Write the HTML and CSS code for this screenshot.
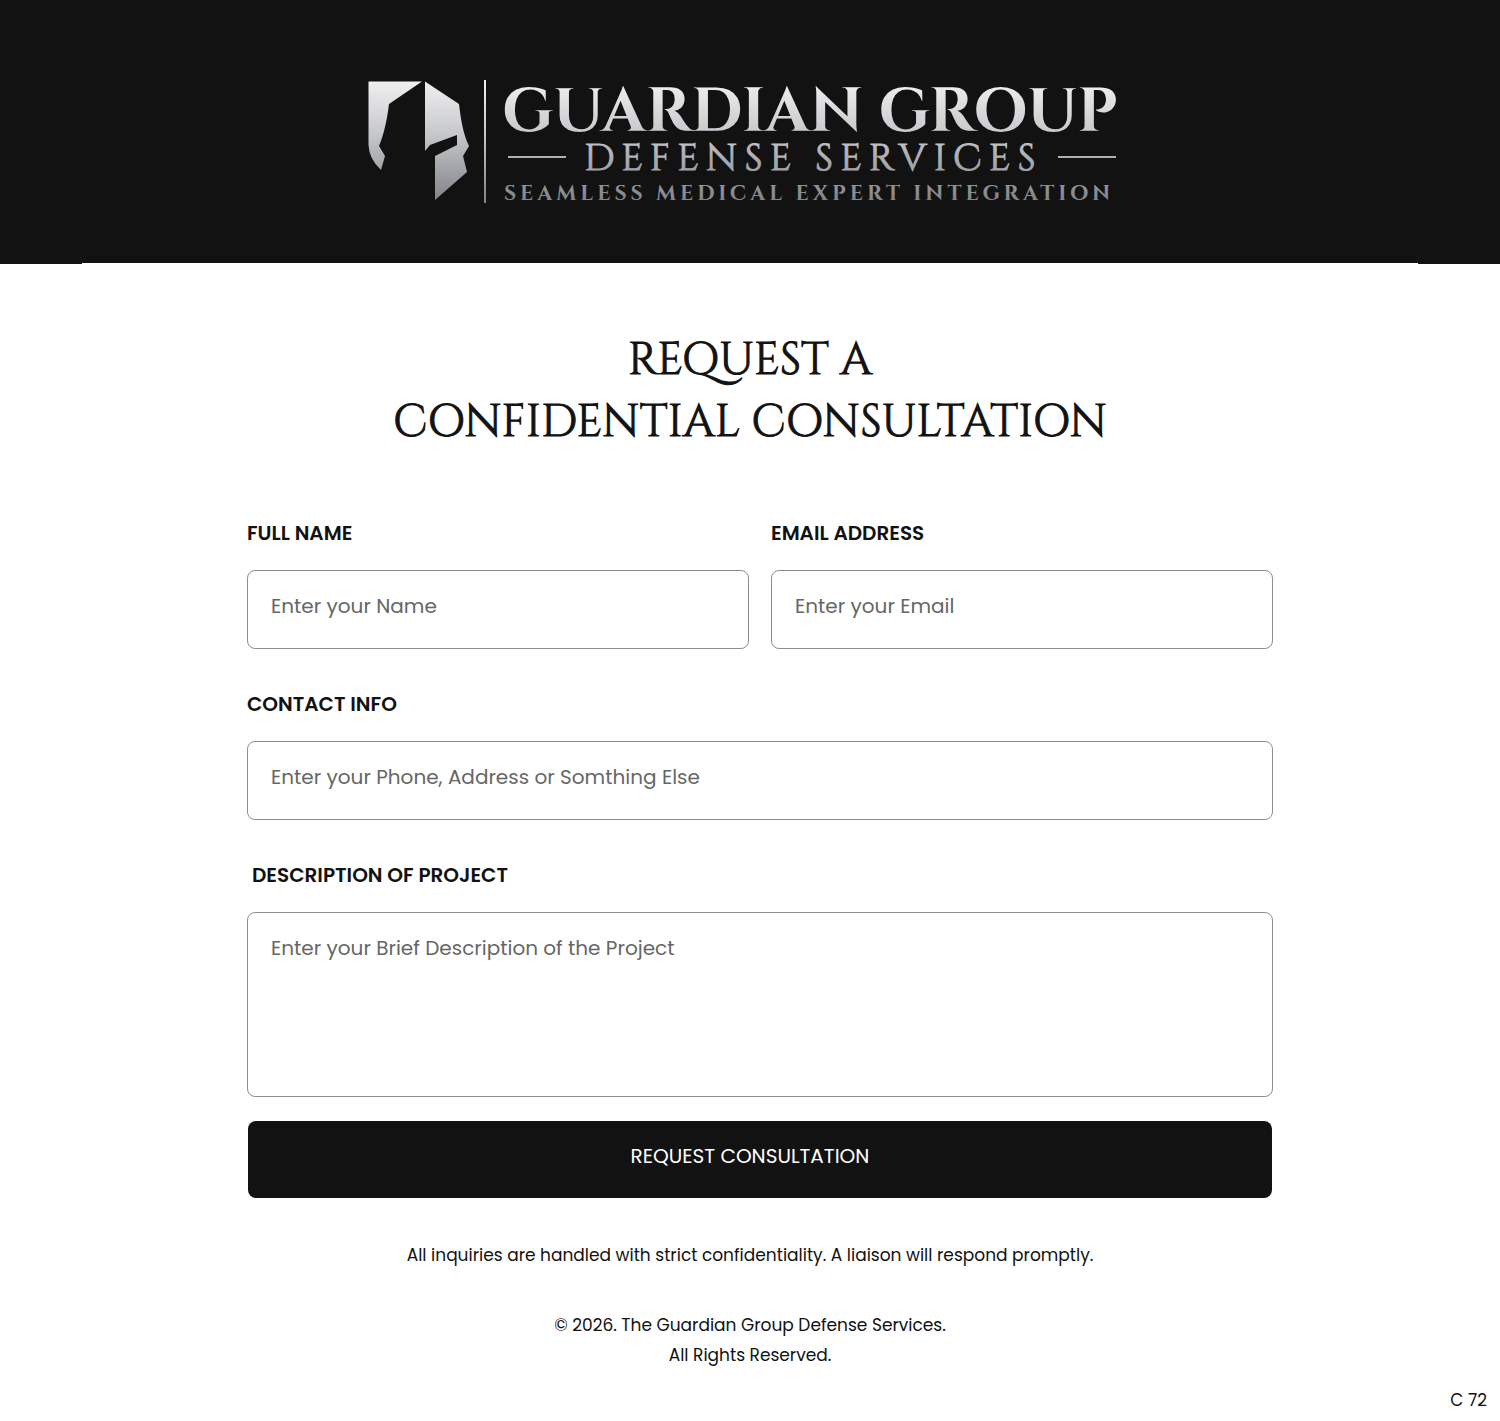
FILE: index.html
```html
<!DOCTYPE html>
<html lang="en">
<head>
<meta charset="utf-8">
<meta name="viewport" content="width=device-width, initial-scale=1">
<title>Guardian Group Defense Services</title>
<link rel="stylesheet" href="styles.css">
</head>
<body>
<header class="site-header">
  <svg class="logo" viewBox="0 0 748 124" role="img" aria-label="Guardian Group Defense Services">
    <defs>
      <linearGradient id="silver" gradientUnits="userSpaceOnUse" x1="0" y1="0" x2="0" y2="122">
        <stop offset="0" stop-color="#f1f1f2"/>
        <stop offset="0.45" stop-color="#c6c7ca"/>
        <stop offset="0.75" stop-color="#a0a1a6"/>
        <stop offset="1" stop-color="#828388"/>
      </linearGradient>
    </defs>
    <g fill="url(#silver)">
      <path d="M0.500 1.500H54L21 24C19 40 16 54 11 66L17 76L13 90Q1 79 0.500 65Z"/>
      <path d="M57 1.500L91 24C93 42 96 56 101 66L95 76L99 92L67 120V76L89 65V55L62 65L57 71Z"/>
      <rect x="116" y="0" width="2" height="123"/>
      <rect x="140" y="76" width="58" height="2"/>
      <rect x="690" y="76" width="58" height="2"/>
      <text class="logo-name" x="134" y="51">GUARDIAN GROUP</text>
      <text class="logo-service" x="216" y="90">DEFENSE SERVICES</text>
      <text class="logo-tagline" x="136" y="120">SEAMLESS MEDICAL EXPERT INTEGRATION</text>
    </g>
  </svg>
</header>
<main class="content">
  <h1 class="title">REQUEST A<br>CONFIDENTIAL CONSULTATION</h1>
  <form class="form">
    <div class="row">
      <div class="field">
        <label for="name">FULL NAME</label>
        <input id="name" type="text" placeholder="Enter your Name">
      </div>
      <div class="field">
        <label for="email">EMAIL ADDRESS</label>
        <input id="email" type="email" placeholder="Enter your Email">
      </div>
    </div>
    <div class="field">
      <label for="contact">CONTACT INFO</label>
      <input id="contact" type="text" placeholder="Enter your Phone, Address or Somthing Else">
    </div>
    <div class="field">
      <label class="indented" for="description">DESCRIPTION OF PROJECT</label>
      <textarea id="description" placeholder="Enter your Brief Description of the Project"></textarea>
    </div>
    <button class="submit" type="submit">REQUEST CONSULTATION</button>
  </form>
  <p class="note">All inquiries are handled with strict confidentiality. A liaison will respond promptly.</p>
</main>
<footer class="site-footer">
  <p>© 2026. The Guardian Group Defense Services.<br>All Rights Reserved.</p>
  <p class="code">C 72</p>
</footer>
</body>
</html>
```
FILE: styles.css
```css
* { box-sizing: border-box; }

body {
  margin: 0;
  background: #fff;
  color: #121212;
  font-family: Poppins, Inter, sans-serif;
  font-size: 17px;
  line-height: 30px;
}

p { margin: 0; }

.site-header {
  display: flex;
  justify-content: center;
  padding: 80px 24px 60px;
  background: #121212;
}

.logo {
  width: 100%;
  max-width: 748px;
  margin-right: 16px;
  overflow: visible;
  font-family: Cinzel, "Liberation Serif", serif;
  font-weight: 700;
}

.logo-name { font-size: 62px; }

.logo-service {
  font-size: 38px;
  font-weight: 400;
  letter-spacing: 7px;
  stroke: url(#silver);
  stroke-width: 1px;
}

.logo-tagline { font-size: 21px; letter-spacing: 4px; }

.content {
  max-width: 1336px;
  margin: -1px auto 0;
  padding: 67px 24px 0;
  background: #fff;
}

.title {
  margin: 0;
  font-family: Cinzel, "Liberation Serif", serif;
  font-size: 45px;
  font-weight: 400;
  line-height: 62px;
  text-align: center;
  -webkit-text-stroke: 1px #121212;
}

.form {
  display: flex;
  flex-direction: column;
  max-width: 1046px;
  margin: 64px auto 0;
  padding-left: 20px;
}

.row {
  display: grid;
  grid-template-columns: repeat(auto-fit, minmax(280px, 1fr));
  column-gap: 22px;
}

.field {
  display: flex;
  flex-direction: column;
  gap: 22px;
  margin-bottom: 40px;
}

label {
  font-size: 20px;
  font-weight: 600;
}

.indented { padding-left: 5px; }

input,
textarea {
  width: 100%;
  padding: 20px 23px 27px;
  border: 1px solid #8f8f8f;
  border-radius: 8px;
  background: #fff;
  color: #121212;
  font: inherit;
  font-size: 20px;
}

input { height: 79px; }

textarea {
  height: 185px;
  resize: none;
}

input::placeholder,
textarea::placeholder {
  color: #666;
  opacity: 1;
}

.form > .field:last-of-type { margin-bottom: 24px; }

.submit {
  height: 77px;
  margin: 0 1px;
  padding: 0 20px 8px 0;
  border: 0;
  border-radius: 8px;
  background: #121212;
  color: #fff;
  font: inherit;
  font-size: 20px;
}

.note {
  margin-top: 42px;
  text-align: center;
}

.site-footer {
  padding: 40px 13px 6px;
  text-align: center;
}

.code {
  margin-top: 15px;
  text-align: right;
}
```
